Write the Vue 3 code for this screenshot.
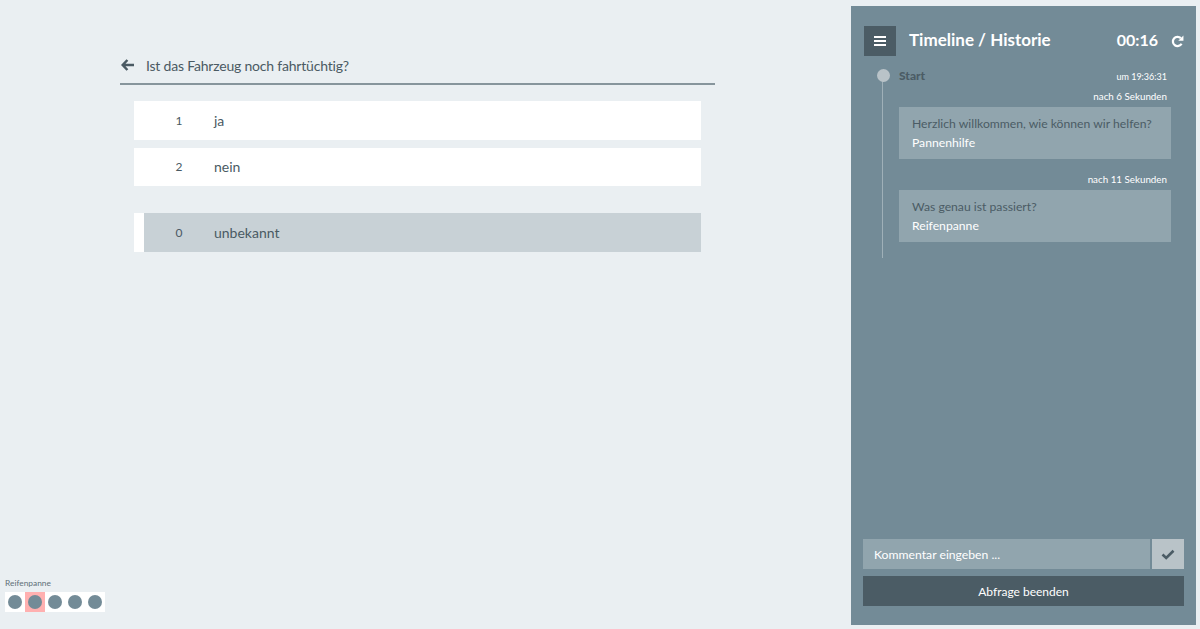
<template>
  <div class="page">
    <main class="query">
      <header class="query__head">
        <svg class="query__back" viewBox="0 0 13 12" width="13" height="12">
          <path d="M6.4 1 1.7 6l4.7 5M1.8 6H13" fill="none" stroke="currentColor" stroke-width="2.5" />
        </svg>
        <h2>Ist das Fahrzeug noch fahrtüchtig?</h2>
      </header>
      <div class="query__list">
        <button v-for="item in answers" :key="item.key" type="button" class="answer">
          <span class="answer__key">{{ item.key }}</span>
          <span>{{ item.label }}</span>
        </button>
        <button type="button" class="answer answer--unknown">
          <span class="answer__key">0</span>
          <span>unbekannt</span>
        </button>
      </div>
    </main>

    <aside class="panel">
      <header class="panel__head">
        <button type="button" class="panel__menu" aria-label="Menü">
          <svg viewBox="0 0 12 10" width="12" height="10">
            <path d="M0 1h12M0 5h12M0 9h12" stroke="currentColor" stroke-width="2" />
          </svg>
        </button>
        <h1>Timeline / Historie</h1>
        <strong class="panel__time">00:16</strong>
        <svg class="panel__reload" viewBox="0 0 14 14" width="13" height="13">
          <path d="M11.4 9.4A5 5 0 1 1 10.6 3.4" fill="none" stroke="currentColor" stroke-width="2.4" />
          <path d="M13.4 0.6V6.2H7.8Z" fill="currentColor" />
        </svg>
      </header>

      <section class="timeline">
        <div class="timeline__start">
          <span class="timeline__dot"></span>
          <b>Start</b>
          <small>um 19:36:31</small>
        </div>
        <div v-for="entry in entries" :key="entry.after" class="entry">
          <small>nach {{ entry.after }} Sekunden</small>
          <div class="entry__card">
            <p>{{ entry.question }}</p>
            <p class="entry__answer">{{ entry.answer }}</p>
          </div>
        </div>
      </section>

      <footer class="panel__foot">
        <div class="comment">
          <input type="text" placeholder="Kommentar eingeben ..." />
          <button type="button" aria-label="Speichern">
            <svg viewBox="0 0 14 11" width="14" height="11">
              <path d="M1.5 5.5 5.2 9 12.5 1.8" fill="none" stroke="currentColor" stroke-width="2.6" />
            </svg>
          </button>
        </div>
        <button type="button" class="finish">Abfrage beenden</button>
      </footer>
    </aside>

    <div class="steps">
      <span class="steps__label">Reifenpanne</span>
      <div class="steps__row">
        <span v-for="n in 5" :key="n" class="steps__cell" :class="{ 'steps__cell--active': n === 2 }">
          <i></i>
        </span>
      </div>
    </div>
  </div>
</template>

<script setup>
const answers = [
  { key: 1, label: 'ja' },
  { key: 2, label: 'nein' },
];

const entries = [
  { after: 6, question: 'Herzlich willkommen, wie können wir helfen?', answer: 'Pannenhilfe' },
  { after: 11, question: 'Was genau ist passiert?', answer: 'Reifenpanne' },
];
</script>

<style>
html,
body {
  margin: 0;
  background: #eaeff2;
}
</style>

<style scoped>
.page {
  position: relative;
  box-sizing: border-box;
  display: flex;
  justify-content: space-between;
  height: 629px;
  padding: 6px 4px 4px 120px;
  overflow: hidden;
  background: #eaeff2;
  color: #4a5a63;
  font-family: "Lato", "Noto Sans", sans-serif;
  font-size: 14px;
}
button {
  font-family: inherit;
  cursor: pointer;
}
.query {
  width: 595px;
  padding-top: 41px;
}
.query__head {
  display: flex;
  align-items: center;
  gap: 12px;
  height: 38px;
  box-sizing: border-box;
  border-bottom: 2px solid #87959c;
}
.query__back {
  flex: none;
  margin-left: 1px;
  color: #4a5a63;
}
.query__head h2 {
  margin: 0;
  font-size: 14px;
  font-weight: 400;
  letter-spacing: -0.2px;
}
.query__list {
  display: flex;
  flex-direction: column;
  gap: 8px;
  width: 567px;
  margin: 16px 0 0 14px;
}
.answer {
  display: flex;
  align-items: center;
  height: 38.5px;
  box-sizing: border-box;
  border: 0;
  border-left: 10px solid #fff;
  padding: 0;
  background: #fff;
  color: #4a5a63;
  font-size: 14px;
  text-align: left;
}
.answer__key {
  flex: none;
  width: 70px;
  font-size: 12px;
  text-align: center;
}
.answer--unknown {
  margin-top: 19px;
  background: #c8d1d6;
}
.panel {
  box-sizing: border-box;
  display: flex;
  flex-direction: column;
  width: 345px;
  height: 619px;
  padding: 20px 12px 19px;
  background: #738b97;
  color: #fff;
}
.panel__head {
  display: flex;
  align-items: center;
  height: 30px;
  padding-left: 1px;
}
.panel__menu {
  display: flex;
  align-items: center;
  justify-content: center;
  width: 32px;
  height: 30px;
  border: 0;
  padding: 0;
  background: #4b5c65;
  color: #fff;
}
.panel__head h1 {
  flex: 1;
  margin: 0 0 0 13px;
  padding-bottom: 3px;
  font-size: 17px;
  font-weight: 700;
}
.panel__time {
  padding-bottom: 3px;
  font-size: 16px;
  font-weight: 700;
}
.panel__reload {
  margin-left: 13px;
}
.timeline {
  position: relative;
  flex: 1;
  margin-top: 13px;
  padding: 0 13px 0 36px;
}
.timeline::before {
  content: "";
  position: absolute;
  top: 6px;
  left: 19px;
  width: 1px;
  height: 183px;
  background: #9fb0b8;
}
.timeline__dot {
  position: absolute;
  top: 0;
  left: 14px;
  width: 13px;
  height: 13px;
  border-radius: 50%;
  background: #b9c3c8;
}
.timeline__start {
  display: flex;
  justify-content: space-between;
  align-items: center;
  height: 12px;
  padding-right: 4px;
}
.timeline__start b {
  color: #4b5c65;
  font-size: 12px;
  font-weight: 900;
}
.timeline__start small {
  margin-top: 3px;
  font-size: 9px;
  color: #fff;
}
.entry {
  display: flex;
  flex-direction: column;
  align-items: flex-end;
  margin-top: 8.5px;
}
.entry + .entry {
  margin-top: 14px;
}
.entry small {
  height: 13px;
  padding-right: 4px;
  margin-bottom: 4.5px;
  color: #fff;
  font-size: 9.8px;
  line-height: 13px;
}
.entry__card {
  box-sizing: border-box;
  align-self: stretch;
  height: 51.5px;
  padding: 7.6px 13px;
  background: #91a5ae;
  font-size: 12.2px;
}
.entry__card p {
  margin: 0;
  height: 19.4px;
  line-height: 17px;
  color: #4b5c65;
  white-space: nowrap;
}
.entry__card .entry__answer {
  color: #fff;
}
.panel__foot {
  display: flex;
  flex-direction: column;
  gap: 7px;
}
.comment {
  display: flex;
  gap: 2px;
  height: 30px;
}
.comment input {
  flex: 1;
  min-width: 0;
  border: 0;
  padding: 0 11px;
  background: #91a5ae;
  color: #fff;
  font-family: inherit;
  font-size: 12.2px;
}
.comment input::placeholder {
  color: #fff;
  opacity: 1;
}
.comment button {
  display: flex;
  align-items: center;
  justify-content: center;
  flex: none;
  width: 32px;
  border: 0;
  padding: 0;
  background: #b9c3c8;
  color: #4b5c65;
}
.finish {
  height: 30px;
  border: 0;
  padding: 0;
  background: #4b5c65;
  color: #fff;
  font-size: 12px;
}
.steps {
  position: absolute;
  left: 5px;
  bottom: 17px;
}
.steps__label {
  display: block;
  margin-bottom: 3px;
  color: #5f6f78;
  font-size: 8.4px;
  line-height: 11px;
}
.steps__row {
  display: flex;
  background: #fff;
}
.steps__cell {
  display: flex;
  align-items: center;
  justify-content: center;
  width: 20px;
  height: 20px;
}
.steps__cell--active {
  background: #ffb0b0;
}
.steps__cell i {
  width: 14px;
  height: 14px;
  border-radius: 50%;
  background: #738b97;
}
</style>
